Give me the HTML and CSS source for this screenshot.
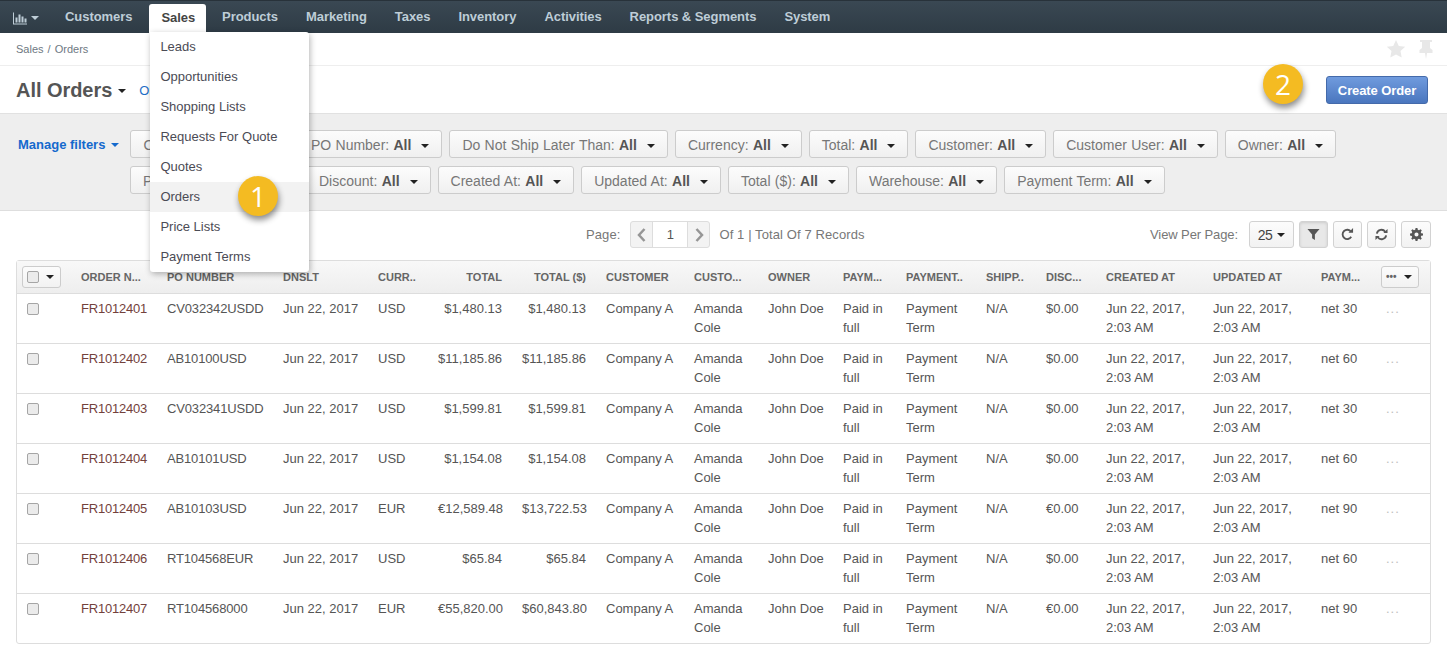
FILE: index.html
```html
<!DOCTYPE html>
<html lang="en">
<head>
    <meta charset="UTF-8">
    <title>All Orders</title>
    <link rel="stylesheet" href="styles.css">
</head>
<body>

<!-- Main menu -->
<nav class="main-nav">
    <a class="nav-item nav-dash">
        <svg class="dash-icon" viewBox="0 0 14 12"><path d="M0 0h1v11h13v1H0z"/><path d="M2.500 5h2v5h-2zM5.500 2h2v8h-2zM8.500 4h2v6h-2zM11.500 6h2v4h-2z"/></svg>
        <span class="caret caret-nav"></span>
    </a>
    <a class="nav-item">Customers</a>
    <div class="nav-item nav-active">
        Sales
        <ul class="dropdown">
            <li>Leads</li>
            <li>Opportunities</li>
            <li>Shopping Lists</li>
            <li>Requests For Quote</li>
            <li>Quotes</li>
            <li class="is-hover">Orders</li>
            <li>Price Lists</li>
            <li>Payment Terms</li>
        </ul>
    </div>
    <a class="nav-item">Products</a>
    <a class="nav-item">Marketing</a>
    <a class="nav-item">Taxes</a>
    <a class="nav-item">Inventory</a>
    <a class="nav-item">Activities</a>
    <a class="nav-item">Reports &amp; Segments</a>
    <a class="nav-item">System</a>
</nav>

<!-- Breadcrumbs -->
<div class="crumbs">
    <span class="crumb-text">Sales&nbsp;/&nbsp;Orders</span>
    <div class="crumb-icons">
        <svg viewBox="0 0 20 20"><path d="M10 1l2.800 5.900 6.400.8-4.700 4.400 1.200 6.400L10 15.400l-5.700 3.100 1.200-6.400L.8 7.700l6.400-.8z"/></svg>
        <svg viewBox="0 0 20 20"><path d="M4 1h12v2h-2v6l2.500 2v3H11l-1 6-1-6H3.500v-3L6 9V3H4z"/></svg>
    </div>
</div>

<!-- Page title -->
<header class="page-head">
    <h1>All Orders</h1>
    <span class="caret caret-title"></span>
    <a class="title-link">Orders</a>
    <button class="btn-create">Create Order</button>
</header>

<!-- Filters -->
<section class="filters">
    <a class="manage-filters">Manage filters <span class="caret caret-blue"></span></a>
    <div class="filter-list">
        <button class="filter filter-first">Order Number: <b>All</b><span class="caret"></span></button>
        <button class="filter">PO Number: <b>All</b><span class="caret"></span></button>
        <button class="filter">Do Not Ship Later Than: <b>All</b><span class="caret"></span></button>
        <button class="filter">Currency: <b>All</b><span class="caret"></span></button>
        <button class="filter">Total: <b>All</b><span class="caret"></span></button>
        <button class="filter">Customer: <b>All</b><span class="caret"></span></button>
        <button class="filter">Customer User: <b>All</b><span class="caret"></span></button>
        <button class="filter">Owner: <b>All</b><span class="caret"></span></button>
        <button class="filter filter-second">Payment Status: <b>All</b><span class="caret"></span></button>
        <button class="filter">Discount: <b>All</b><span class="caret"></span></button>
        <button class="filter">Created At: <b>All</b><span class="caret"></span></button>
        <button class="filter">Updated At: <b>All</b><span class="caret"></span></button>
        <button class="filter">Total ($): <b>All</b><span class="caret"></span></button>
        <button class="filter">Warehouse: <b>All</b><span class="caret"></span></button>
        <button class="filter">Payment Term: <b>All</b><span class="caret"></span></button>
    </div>
</section>

<!-- Grid toolbar -->
<div class="toolbar">
    <div class="pager">
        <span class="pager-label">Page:</span>
        <div class="pager-box">
            <span class="pager-arrow"><svg viewBox="0 0 10 14"><path d="M7.500 1L2 7l5.500 6" /></svg></span>
            <span class="pager-num">1</span>
            <span class="pager-arrow"><svg viewBox="0 0 10 14"><path d="M2.500 1L8 7l-5.500 6" /></svg></span>
        </div>
        <span>Of 1 | Total Of 7 Records</span>
    </div>
    <div class="view-tools">
        <span class="per-page">View Per Page:</span>
        <button class="tool tool-select">25 <span class="caret"></span></button>
        <button class="tool tool-on"><svg viewBox="0 0 14 14"><path d="M0.500 1h13L8.500 7v6l-3-2V7z"/></svg></button>
        <button class="tool"><svg class="stroke" viewBox="0 0 14 14"><path d="M11 9.500A5 5 0 1 1 10.800 4"/><path class="fill" d="M8 5h5V0z"/></svg></button>
        <button class="tool"><svg class="stroke" viewBox="0 0 14 14"><path d="M2 6a5 5 0 0 1 9-2"/><path d="M12 8a5 5 0 0 1-9 2"/><path class="fill" d="M9 5.500h4.500V1zM5 8.500H.5V13z"/></svg></button>
        <button class="tool tool-gear"><svg viewBox="0 0 14 14"><path fill-rule="evenodd" d="M6 0h2l.4 2 1.300.5L11.400 1.400l1.300 1.300-1.100 1.700.5 1.300 1.900.3v2l-1.900.4-.5 1.300 1.100 1.600-1.300 1.300-1.700-1.100-1.300.5L8 14H6l-.4-1.900-1.300-.5-1.700 1.100-1.300-1.300 1.100-1.600-.5-1.300L0 8V6l1.900-.3.5-1.300-1.100-1.700 1.300-1.300 1.700 1.100L5.600 2zM7 4.800a2.200 2.200 0 1 0 0 4.400 2.200 2.200 0 0 0 0-4.400z"/></svg></button>
    </div>
</div>

<!-- Orders table -->
<div class="grid-wrap">
<table class="grid">
    <colgroup>
        <col class="c-check"><col class="c-order"><col class="c-po"><col class="c-dnslt"><col class="c-curr">
        <col class="c-total"><col class="c-total"><col class="c-cust"><col class="c-user"><col class="c-owner">
        <col class="c-pay"><col class="c-term"><col class="c-ship"><col class="c-disc"><col class="c-date">
        <col class="c-date2"><col class="c-net"><col>
    </colgroup>
    <thead>
        <tr>
            <th class="cell-check"><span class="check-menu"><span class="box"></span><span class="caret"></span></span></th>
            <th>Order N...</th>
            <th>PO Number</th>
            <th>DNSLT</th>
            <th>Curr..</th>
            <th class="num">Total</th>
            <th class="num">Total ($)</th>
            <th>Customer</th>
            <th>Custo...</th>
            <th>Owner</th>
            <th>Paym...</th>
            <th>Payment..</th>
            <th>Shipp..</th>
            <th>Disc...</th>
            <th>Created At</th>
            <th>Updated At</th>
            <th>Paym...</th>
            <th class="cell-more"><span class="more-menu"><span class="dots">&bull;&bull;&bull;</span><span class="caret"></span></span></th>
        </tr>
    </thead>
    <tbody>
        <tr>
            <td class="cell-check"><span class="box"></span></td><td class="order-no">FR1012401</td><td class="po-no">CV032342USDD</td><td class="one-line">Jun 22, 2017</td><td>USD</td>
            <td class="num">$1,480.13</td><td class="num">$1,480.13</td><td>Company A</td><td>Amanda Cole</td><td class="one-line">John Doe</td>
            <td>Paid in full</td><td>Payment Term</td><td>N/A</td><td>$0.00</td><td>Jun 22, 2017, 2:03 AM</td><td>Jun 22, 2017, 2:03 AM</td><td>net 30</td><td class="row-more">...</td>
        </tr>
        <tr>
            <td class="cell-check"><span class="box"></span></td><td class="order-no">FR1012402</td><td class="po-no">AB10100USD</td><td class="one-line">Jun 22, 2017</td><td>USD</td>
            <td class="num">$11,185.86</td><td class="num">$11,185.86</td><td>Company A</td><td>Amanda Cole</td><td class="one-line">John Doe</td>
            <td>Paid in full</td><td>Payment Term</td><td>N/A</td><td>$0.00</td><td>Jun 22, 2017, 2:03 AM</td><td>Jun 22, 2017, 2:03 AM</td><td>net 60</td><td class="row-more">...</td>
        </tr>
        <tr>
            <td class="cell-check"><span class="box"></span></td><td class="order-no">FR1012403</td><td class="po-no">CV032341USDD</td><td class="one-line">Jun 22, 2017</td><td>USD</td>
            <td class="num">$1,599.81</td><td class="num">$1,599.81</td><td>Company A</td><td>Amanda Cole</td><td class="one-line">John Doe</td>
            <td>Paid in full</td><td>Payment Term</td><td>N/A</td><td>$0.00</td><td>Jun 22, 2017, 2:03 AM</td><td>Jun 22, 2017, 2:03 AM</td><td>net 30</td><td class="row-more">...</td>
        </tr>
        <tr>
            <td class="cell-check"><span class="box"></span></td><td class="order-no">FR1012404</td><td class="po-no">AB10101USD</td><td class="one-line">Jun 22, 2017</td><td>USD</td>
            <td class="num">$1,154.08</td><td class="num">$1,154.08</td><td>Company A</td><td>Amanda Cole</td><td class="one-line">John Doe</td>
            <td>Paid in full</td><td>Payment Term</td><td>N/A</td><td>$0.00</td><td>Jun 22, 2017, 2:03 AM</td><td>Jun 22, 2017, 2:03 AM</td><td>net 60</td><td class="row-more">...</td>
        </tr>
        <tr>
            <td class="cell-check"><span class="box"></span></td><td class="order-no">FR1012405</td><td class="po-no">AB10103USD</td><td class="one-line">Jun 22, 2017</td><td>EUR</td>
            <td class="num">€12,589.48</td><td class="num">$13,722.53</td><td>Company A</td><td>Amanda Cole</td><td class="one-line">John Doe</td>
            <td>Paid in full</td><td>Payment Term</td><td>N/A</td><td>€0.00</td><td>Jun 22, 2017, 2:03 AM</td><td>Jun 22, 2017, 2:03 AM</td><td>net 90</td><td class="row-more">...</td>
        </tr>
        <tr>
            <td class="cell-check"><span class="box"></span></td><td class="order-no">FR1012406</td><td class="po-no">RT104568EUR</td><td class="one-line">Jun 22, 2017</td><td>USD</td>
            <td class="num">$65.84</td><td class="num">$65.84</td><td>Company A</td><td>Amanda Cole</td><td class="one-line">John Doe</td>
            <td>Paid in full</td><td>Payment Term</td><td>N/A</td><td>$0.00</td><td>Jun 22, 2017, 2:03 AM</td><td>Jun 22, 2017, 2:03 AM</td><td>net 60</td><td class="row-more">...</td>
        </tr>
        <tr>
            <td class="cell-check"><span class="box"></span></td><td class="order-no">FR1012407</td><td class="po-no">RT104568000</td><td class="one-line">Jun 22, 2017</td><td>EUR</td>
            <td class="num">€55,820.00</td><td class="num">$60,843.80</td><td>Company A</td><td>Amanda Cole</td><td class="one-line">John Doe</td>
            <td>Paid in full</td><td>Payment Term</td><td>N/A</td><td>€0.00</td><td>Jun 22, 2017, 2:03 AM</td><td>Jun 22, 2017, 2:03 AM</td><td>net 90</td><td class="row-more">...</td>
        </tr>
    </tbody>
</table>
</div>

<!-- Callout badges -->
<span class="badge badge-one">1</span>
<span class="badge badge-two">2</span>

</body>
</html>
```

FILE: styles.css
```css
/* General styling */
body {
    font-family: 'Liberation Sans', Arial, sans-serif;
    font-size: 13px;
    color: rgb(85, 85, 85);
    margin: 0;
    padding: 0;
    background-color: white;
    position: relative;
}

button {
    font-family: inherit;
}

.caret {
    display: inline-block;
    width: 0;
    height: 0;
    border-left: 4px solid transparent;
    border-right: 4px solid transparent;
    border-top: 4px solid rgb(34, 34, 34);
}

/* Main menu */
.main-nav {
    height: 30px;
    padding-top: 2px;
    padding-left: 2px;
    display: flex;
    background: linear-gradient(rgb(58, 72, 83), rgb(46, 59, 69));
    border-top: 1px solid rgb(40, 50, 58);
}

.nav-item {
    padding: 0 14px;
    line-height: 27px;
    font-weight: bold;
    letter-spacing: -0.06px;
    color: rgb(190, 205, 215);
}

.nav-dash {
    padding: 0 8px 0 11px;
    width: 26px;
    display: flex;
    align-items: center;
    gap: 4px;
    margin-right: 4px;
}

.dash-icon {
    width: 15px;
    height: 13px;
    fill: rgb(190, 205, 215);
}

.caret-nav {
    border-top-color: rgb(190, 205, 215);
}

.nav-active {
    position: relative;
    padding: 0 11px 0 12px;
    margin: 1px 2px 0 3px;
    height: 29px;
    background-color: white;
    color: rgb(68, 68, 68);
    border-radius: 3px 3px 0 0;
    z-index: 5;
}

.dropdown {
    position: absolute;
    top: 28px;
    left: 1px;
    width: 159px;
    margin: 0;
    padding: 0;
    list-style: none;
    letter-spacing: 0;
    background-color: white;
    border-radius: 0 3px 3px 3px;
    box-shadow: 1px 2px 6px rgba(0, 0, 0, 0.3);
}

.dropdown li {
    height: 30px;
    line-height: 30px;
    padding-left: 10px;
    font-weight: normal;
    color: rgb(75, 75, 85);
}

.dropdown .is-hover {
    background-color: rgb(242, 242, 242);
}

/* Breadcrumbs */
.crumbs {
    height: 32px;
    padding: 0 16px;
    display: flex;
    align-items: center;
    justify-content: space-between;
    font-size: 11px;
    color: rgb(110, 120, 130);
    border-bottom: 1px solid rgb(238, 238, 238);
}

.crumb-text {
    word-spacing: 1px;
}

.crumb-icons {
    display: flex;
    gap: 10px;
    margin-right: -5px;
}

.crumb-icons svg {
    width: 20px;
    height: 20px;
    fill: rgb(232, 232, 232);
}

/* Page title */
.page-head {
    height: 48px;
    padding: 0 19px 0 16px;
    display: flex;
    align-items: center;
    box-sizing: border-box;
    border-bottom: 1px solid rgb(225, 225, 225);
}

h1 {
    margin: 2px 0 0;
    font-size: 20px;
    letter-spacing: -0.05px;
    color: rgb(85, 85, 85);
}

.caret-title {
    margin-left: 6px;
    margin-top: 2px;
}

.title-link {
    margin-left: 13px;
    margin-top: 2px;
    color: rgb(30, 110, 200);
    font-size: 13px;
}

.btn-create {
    margin-left: auto;
    margin-top: 1px;
    width: 102px;
    height: 28px;
    padding: 0;
    font-size: 13px;
    font-weight: bold;
    letter-spacing: -0.1px;
    color: white;
    background: linear-gradient(rgb(112, 155, 222), rgb(74, 118, 190));
    border: 1px solid rgb(68, 106, 170);
    border-radius: 3px;
}

/* Filters */
.filters {
    height: 97px;
    padding: 16px 0 0 18px;
    box-sizing: border-box;
    display: flex;
    background-color: rgb(238, 238, 238);
    border-bottom: 1px solid rgb(222, 222, 222);
}

.manage-filters {
    width: 112px;
    flex-shrink: 0;
    line-height: 30px;
    font-weight: bold;
    color: rgb(20, 105, 205);
}

.caret-blue {
    border-top-color: rgb(20, 105, 205);
    margin-left: 2px;
    vertical-align: 2px;
}

.filter-list {
    display: flex;
    flex-wrap: wrap;
    align-content: flex-start;
    gap: 8px 7px;
    width: 1210px;
}

.filter {
    height: 28px;
    padding: 2px 12px 0;
    font-size: 14px;
    word-spacing: 0.4px;
    color: rgb(119, 119, 119);
    background: linear-gradient(rgb(252, 252, 252), rgb(240, 240, 240));
    border: 1px solid rgb(204, 204, 204);
    border-radius: 3px;
    white-space: nowrap;
}

.filter b {
    color: rgb(85, 85, 85);
}

.filter .caret {
    margin-left: 10px;
    vertical-align: 2px;
}

.filter-first {
    width: 161px;
}

.filter-second {
    width: 169px;
}

/* Grid toolbar */
.toolbar {
    height: 49px;
    padding: 10px 16px 0 586px;
    box-sizing: border-box;
    display: flex;
    align-items: flex-start;
    justify-content: space-between;
    letter-spacing: 0.1px;
    color: rgb(119, 119, 119);
}

.pager {
    display: flex;
    align-items: center;
    gap: 9px;
}

.pager-label {
    margin-right: 1px;
}

.pager-box {
    display: flex;
    height: 27px;
    box-sizing: border-box;
    border: 1px solid rgb(221, 221, 221);
    border-radius: 3px;
    background-color: rgb(243, 243, 243);
}

.pager-arrow {
    width: 21px;
    display: flex;
    align-items: center;
    justify-content: center;
}

.pager-arrow svg {
    width: 10px;
    height: 14px;
    fill: none;
    stroke: rgb(150, 150, 150);
    stroke-width: 2.5;
}

.pager-num {
    width: 36px;
    box-sizing: border-box;
    line-height: 25px;
    text-align: center;
    background-color: white;
    border-left: 1px solid rgb(221, 221, 221);
    border-right: 1px solid rgb(221, 221, 221);
    color: rgb(85, 85, 85);
}

.view-tools {
    display: flex;
    align-items: center;
    gap: 5px;
}

.per-page {
    margin-right: 6px;
    letter-spacing: -0.1px;
}

.tool {
    width: 29px;
    height: 27px;
    padding: 0;
    background: linear-gradient(rgb(252, 252, 252), rgb(242, 242, 242));
    border: 1px solid rgb(210, 210, 210);
    border-radius: 3px;
    display: flex;
    align-items: center;
    justify-content: center;
}

.tool-gear {
    width: 30px;
}

.tool svg {
    width: 13px;
    height: 13px;
    fill: rgb(85, 85, 85);
}

.tool svg.stroke {
    fill: none;
    stroke: rgb(85, 85, 85);
    stroke-width: 2;
}

.tool svg .fill {
    fill: rgb(85, 85, 85);
    stroke: none;
}

.tool-on {
    background: rgb(232, 232, 232);
    box-shadow: inset 0 1px 3px rgba(0, 0, 0, 0.12);
}

.tool-select {
    width: 45px;
    gap: 5px;
    font-size: 14px;
    letter-spacing: -0.5px;
    color: rgb(68, 68, 68);
}

/* Table styling */
.grid-wrap {
    margin: 0 16px;
    border: 1px solid rgb(221, 221, 221);
    border-radius: 3px;
}

.grid {
    width: 100%;
    table-layout: fixed;
    border-collapse: collapse;
}

.c-check { width: 54px; }
.c-order { width: 86px; }
.c-po { width: 116px; }
.c-dnslt { width: 95px; }
.c-curr { width: 60px; }
.c-total { width: 84px; }
.c-cust { width: 88px; }
.c-user { width: 74px; }
.c-owner { width: 75px; }
.c-pay { width: 63px; }
.c-term { width: 80px; }
.c-ship { width: 60px; }
.c-disc { width: 60px; }
.c-date { width: 107px; }
.c-date2 { width: 108px; }
.c-net { width: 65px; }

th {
    height: 32px;
    padding: 0 10px;
    box-sizing: border-box;
    text-align: left;
    font-size: 11px;
    font-weight: bold;
    text-transform: uppercase;
    white-space: nowrap;
    color: rgb(102, 102, 102);
    background: linear-gradient(rgb(248, 248, 248), rgb(238, 238, 238));
    border-bottom: 1px solid rgb(221, 221, 221);
}

td {
    height: 50px;
    padding: 5px 10px 0;
    box-sizing: border-box;
    vertical-align: top;
    line-height: 19px;
    border-bottom: 1px solid rgb(221, 221, 221);
}

tbody tr:last-child td {
    border-bottom: none;
}

.grid .num {
    text-align: right;
}

.order-no {
    letter-spacing: -0.2px;
    color: rgb(115, 65, 60);
}

.po-no {
    letter-spacing: -0.15px;
}

.one-line {
    white-space: nowrap;
}

.cell-check {
    padding: 0 0 0 10px;
}

td.cell-check {
    padding-top: 9px;
}

.box {
    display: block;
    width: 10px;
    height: 10px;
    background-color: rgb(235, 235, 235);
    border: 1px solid rgb(165, 165, 165);
    border-radius: 2px;
}

.check-menu {
    width: 39px;
    height: 22px;
    margin-left: -5px;
    padding: 0 6px 0 4px;
    box-sizing: border-box;
    display: flex;
    align-items: center;
    justify-content: space-between;
    background: linear-gradient(rgb(252, 252, 252), rgb(242, 242, 242));
    border: 1px solid rgb(204, 204, 204);
    border-radius: 3px;
}

.cell-more {
    padding: 0 0 0 5px;
}

.more-menu {
    width: 38px;
    height: 22px;
    padding: 0 6px 0 4px;
    box-sizing: border-box;
    display: flex;
    align-items: center;
    justify-content: space-between;
    background: linear-gradient(rgb(252, 252, 252), rgb(242, 242, 242));
    border: 1px solid rgb(204, 204, 204);
    border-radius: 3px;
}

.dots {
    font-size: 10px;
    line-height: 10px;
}

.row-more {
    color: rgb(190, 190, 190);
    letter-spacing: 1px;
}

/* Callout badges */
.badge {
    position: absolute;
    width: 40px;
    height: 40px;
    line-height: 40px;
    text-align: center;
    font-family: 'Open Sans', sans-serif;
    font-size: 28px;
    color: white;
    background-color: rgb(244, 187, 34);
    border-radius: 50%;
    box-shadow: 1px 4px 6px rgba(0, 0, 0, 0.45);
    z-index: 10;
}

.badge-one {
    left: 238px;
    top: 176px;
}

.badge-two {
    left: 1263px;
    top: 64px;
}
```
